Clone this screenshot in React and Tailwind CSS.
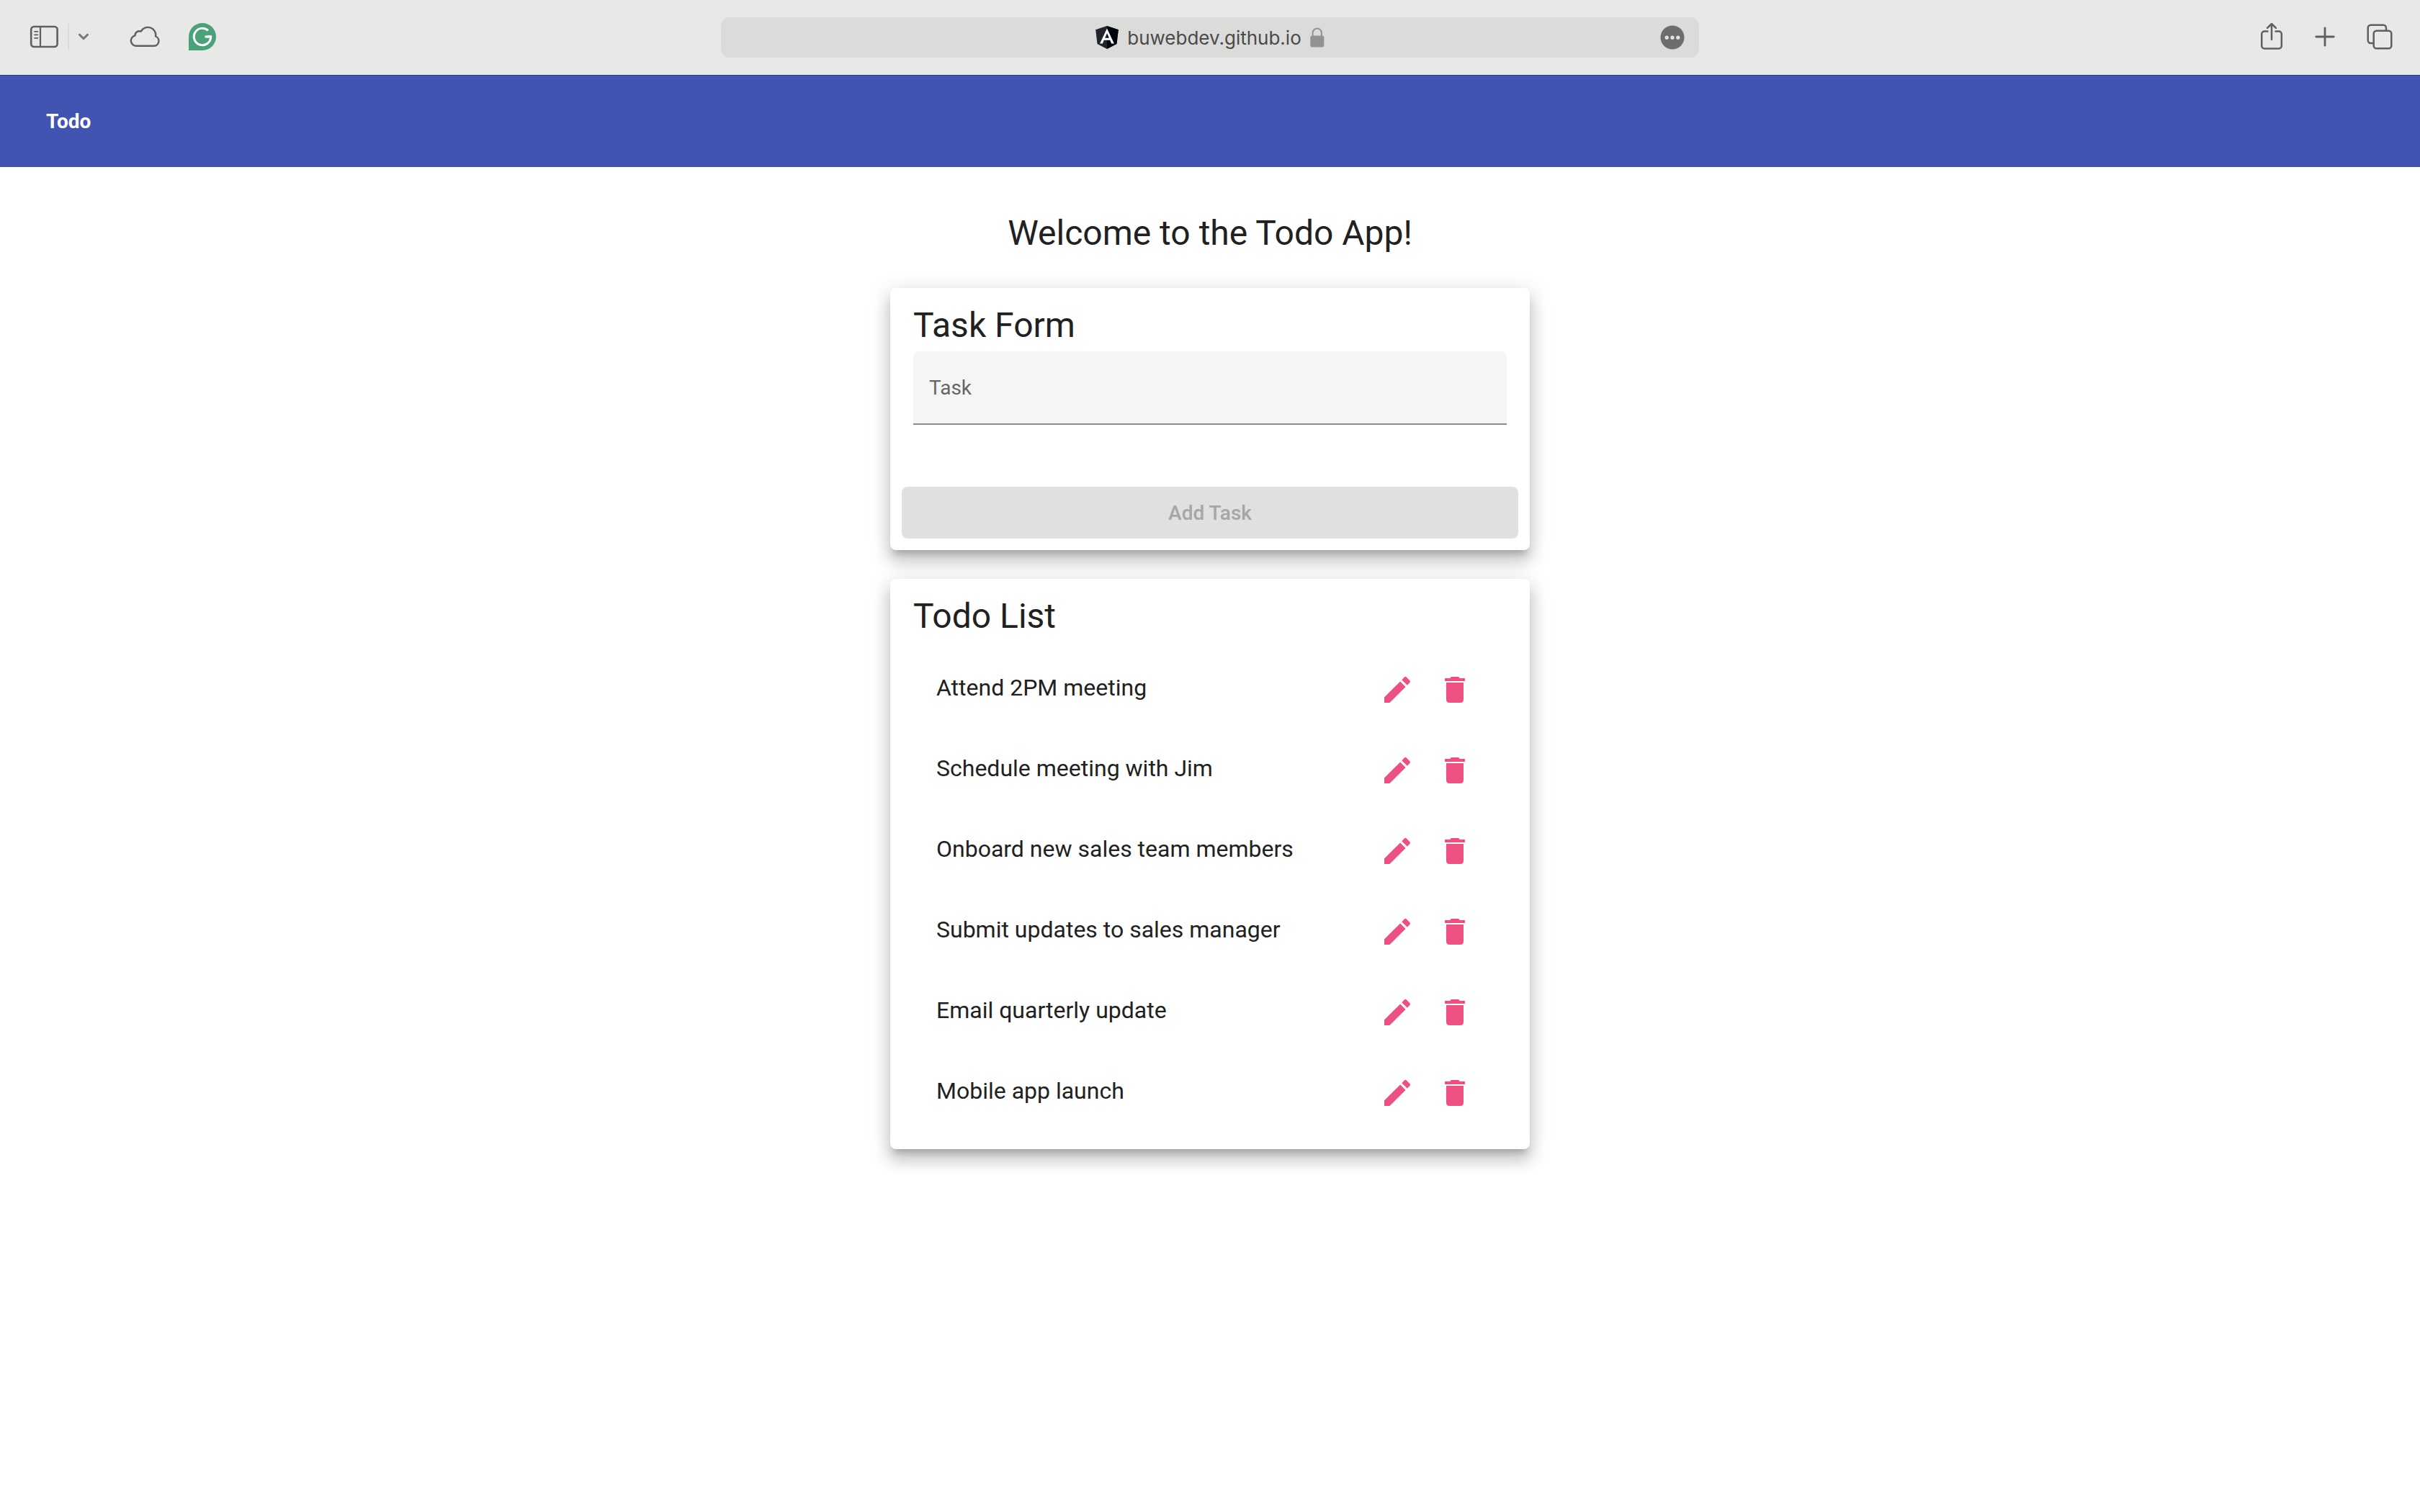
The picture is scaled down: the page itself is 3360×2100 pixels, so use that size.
import React, { useState } from "react";

const TASKS = [
  "Attend 2PM meeting",
  "Schedule meeting with Jim",
  "Onboard new sales team members",
  "Submit updates to sales manager",
  "Email quarterly update",
  "Mobile app launch",
];

function SidebarIcon() {
  return (
    <svg className="h-8 w-10" viewBox="0 0 40 32" fill="none" stroke="#5f5f5d" strokeLinecap="round">
      <rect x="2.2" y="2" width="36.4" height="28" rx="4" strokeWidth="2.6" />
      <path d="M15 2v28" strokeWidth="2.2" />
      <path d="M7 8.8h4.400M7 13.300h4.400M7 17.800h4.400" strokeWidth="1.8" />
    </svg>
  );
}

function ChevronIcon() {
  return (
    <svg className="h-4 w-4" viewBox="0 0 16 16" fill="none" stroke="#77777b" strokeWidth="3" strokeLinecap="round" strokeLinejoin="round">
      <path d="M2.500 5.200 8 10.600l5.500-5.400" />
    </svg>
  );
}

function CloudIcon() {
  return (
    <svg className="h-8 w-[42px]" viewBox="0 0 42 32" fill="none" stroke="#5f5f5d" strokeWidth="2.4" strokeLinecap="round" strokeLinejoin="round">
      <path d="M9.500 28.800h24a6.900 6.900 0 0 0 2.600-13.300A10.900 10.900 0 0 0 15.700 8.700a6 6 0 0 0-8.200 5.700A7.300 7.300 0 0 0 9.500 28.800Z" />
    </svg>
  );
}

function GrammarlyIcon() {
  return (
    <svg className="h-[38px] w-[38px]" viewBox="0 0 38 38" fill="none">
      <path d="M0 38V19a19 19 0 1 1 19 19Z" fill="#4aa278" />
      <path d="M27 10.400A11.700 11.700 0 1 0 30.700 19H22.500" stroke="#fff" strokeWidth="3" />
      <path d="M25.500 18.800h6" stroke="#fff" strokeWidth="3" />
    </svg>
  );
}

function AngularIcon() {
  return (
    <svg className="h-8 w-8 shrink-0" viewBox="31 30 188 200" preserveAspectRatio="none" aria-hidden="true">
      <path d="M125 30 31.900 63.200l14.200 123.100L125 230l78.900-43.700 14.200-123.100Z" fill="#22252f" />
      <path d="M125 30v200l78.900-43.700 14.200-123.100Z" fill="#02050f" />
      <path d="M125 52.100 66.800 182.600h21.700l11.700-29.200h49.400l11.700 29.200H183Zm17 83.300h-34l17-40.900Z" fill="#fff" />
    </svg>
  );
}

function LockIcon() {
  return (
    <svg className="h-7 w-5 shrink-0" viewBox="0 0 20 28" fill="none" aria-hidden="true">
      <path d="M3.600 13V7.600a6.100 6.100 0 0 1 12.300 0V13" stroke="#929290" strokeWidth="2" />
      <rect x="0.300" y="11.500" width="19" height="16" rx="2.800" fill="#929290" />
    </svg>
  );
}

function MoreIcon() {
  return (
    <svg className="h-[34px] w-[34px]" viewBox="0 0 34 34">
      <circle cx="17" cy="17" r="16.500" fill="#6d6d6c" />
      <g fill="#e4e4e2">
        <circle cx="9.200" cy="17.200" r="2.600" />
        <circle cx="17" cy="17.200" r="2.600" />
        <circle cx="24.800" cy="17.200" r="2.600" />
      </g>
    </svg>
  );
}

function ShareIcon() {
  return (
    <svg className="h-10 w-8" viewBox="0 0 32 40" fill="none" stroke="#5f5f5d" strokeWidth="2.500" strokeLinecap="round" strokeLinejoin="round">
      <path d="M11.500 12.400H6a3.800 3.800 0 0 0-3.800 3.800v16.400A3.800 3.800 0 0 0 6 36.400h20a3.800 3.800 0 0 0 3.800-3.800V16.200a3.800 3.800 0 0 0-3.800-3.800h-5.500" strokeLinecap="butt" />
      <path d="M16 24V2.400M10 7.800l6-5.800 6 5.800" />
    </svg>
  );
}

function PlusIcon() {
  return (
    <svg className="h-7 w-7" viewBox="0 0 28 28" fill="none" stroke="#5f5f5d" strokeWidth="2.800" strokeLinecap="round">
      <path d="M14 1.800v24.400M1.800 14h24.400" />
    </svg>
  );
}

function TabsIcon() {
  return (
    <svg className="h-9 w-9" viewBox="0 0 36 36" fill="none" stroke="#5f5f5d" strokeWidth="2.500">
      <path d="M9.500 27H5.600a3.900 3.900 0 0 1-3.900-3.900V5.600a3.900 3.900 0 0 1 3.900-3.900h17.500A3.900 3.900 0 0 1 27 5.600v3.900" />
      <rect x="9.700" y="9.700" width="24.600" height="24.600" rx="3.900" />
    </svg>
  );
}

function EditIcon() {
  return (
    <svg className="h-12 w-12" viewBox="0 0 24 24" fill="currentColor">
      <path d="M3 17.250V21h3.750L17.810 9.940l-3.750-3.750L3 17.250zM20.710 7.040a.996.996 0 0 0 0-1.410l-2.340-2.340a.996.996 0 0 0-1.410 0l-1.830 1.830 3.750 3.750 1.830-1.830z" />
    </svg>
  );
}

function DeleteIcon() {
  return (
    <svg className="h-12 w-12" viewBox="0 0 24 24" fill="currentColor">
      <path d="M6 19c0 1.100.9 2 2 2h8c1.100 0 2-.9 2-2V7H6v12zM19 4h-3.500l-1-1h-5l-1 1H5v2h14V4z" />
    </svg>
  );
}

function BrowserBar() {
  return (
    <header className="grid h-[104px] grid-cols-[1fr_minmax(0,1358px)_1fr] items-center bg-[#e8e8e6]">
      <div className="flex items-center pb-0.5 pl-[41px]">
        <button aria-label="Show sidebar"><SidebarIcon /></button>
        <span className="ml-[13px] h-9 w-0.5 bg-[#dadad8]" />
        <button className="mr-14 ml-3" aria-label="Tab groups"><ChevronIcon /></button>
        <button className="mr-10" aria-label="iCloud tabs"><CloudIcon /></button>
        <button aria-label="Grammarly"><GrammarlyIcon /></button>
      </div>
      <div className="grid h-14 grid-cols-[1fr_auto_1fr] items-center rounded-xl bg-[#dbdbd9]">
        <span />
        <div className="flex items-center">
          <AngularIcon />
          <input
            aria-label="Address"
            defaultValue="buwebdev.github.io"
            className="mx-3 field-sizing-content bg-transparent pt-0.5 font-[Inter,sans-serif] text-[26px] leading-9 text-[#4a4a49] outline-none"
          />
          <LockIcon />
        </div>
        <button className="mr-5 justify-self-end" aria-label="Page menu"><MoreIcon /></button>
      </div>
      <div className="flex items-center justify-end pr-[38px] pb-0.5">
        <button aria-label="Share"><ShareIcon /></button>
        <button className="mx-11" aria-label="New tab"><PlusIcon /></button>
        <button aria-label="Tab overview"><TabsIcon /></button>
      </div>
    </header>
  );
}

function Card({ title, children }) {
  return (
    <section className="rounded-lg bg-white pt-4 shadow-[0_10px_10px_-6px_rgba(0,0,0,0.2),0_16px_20px_2px_rgba(0,0,0,0.14),0_6px_28px_4px_rgba(0,0,0,0.12)]">
      <h2 className="px-8 text-5xl leading-[72px]">{title}</h2>
      {children}
    </section>
  );
}

function TaskForm() {
  const [task, setTask] = useState("");
  return (
    <Card title="Task Form">
      <form className="px-4 pb-4" onSubmit={(e) => e.preventDefault()}>
        <div className="mx-4 flex h-[102px] items-center rounded-t-lg border-b-2 border-[#8c8c8c] bg-[#f5f5f5] px-[22px] pt-0.5 text-[28px] leading-9">
          <label htmlFor="task" className="text-[#666666]">Task</label>
          <input
            id="task"
            value={task}
            onChange={(e) => setTask(e.target.value)}
            className="ml-4 min-w-0 flex-1 bg-transparent outline-none"
          />
        </div>
        <button
          type="submit"
          disabled={!task}
          className="mt-[86px] h-[72px] w-full rounded-lg bg-[#e0e0e0] pt-0.5 text-[28px] leading-9 font-medium text-[#a6a6a6]"
        >
          Add Task
        </button>
      </form>
    </Card>
  );
}

function TodoList() {
  return (
    <Card title="Todo List">
      <ul className="px-16 pt-2.5 pb-[22px]">
        {TASKS.map((name) => (
          <li key={name} className="flex h-28 items-center justify-between">
            <span className="pb-1.5 text-[32px] leading-12">{name}</span>
            <span className="flex text-[#ec5181]">
              <button className="flex size-20 items-center justify-center" aria-label={"Edit " + name}>
                <EditIcon />
              </button>
              <button className="flex size-20 items-center justify-center" aria-label={"Delete " + name}>
                <DeleteIcon />
              </button>
            </span>
          </li>
        ))}
      </ul>
    </Card>
  );
}

export default function App() {
  return (
    <div className="min-h-screen bg-white font-[Roboto,sans-serif] text-[#212121]">
      <BrowserBar />
      <nav className="flex h-32 items-center border-t border-[#233a8e] bg-[#4154b1] px-16">
        <a href="#" className="text-[28px] leading-9 font-bold text-white">Todo</a>
      </nav>
      <main className="mx-auto max-w-[888px] pt-15">
        <h1 className="text-center text-5xl leading-16">Welcome to the Todo App!</h1>
        <div className="mt-11 flex flex-col gap-10">
          <TaskForm />
          <TodoList />
        </div>
      </main>
    </div>
  );
}
